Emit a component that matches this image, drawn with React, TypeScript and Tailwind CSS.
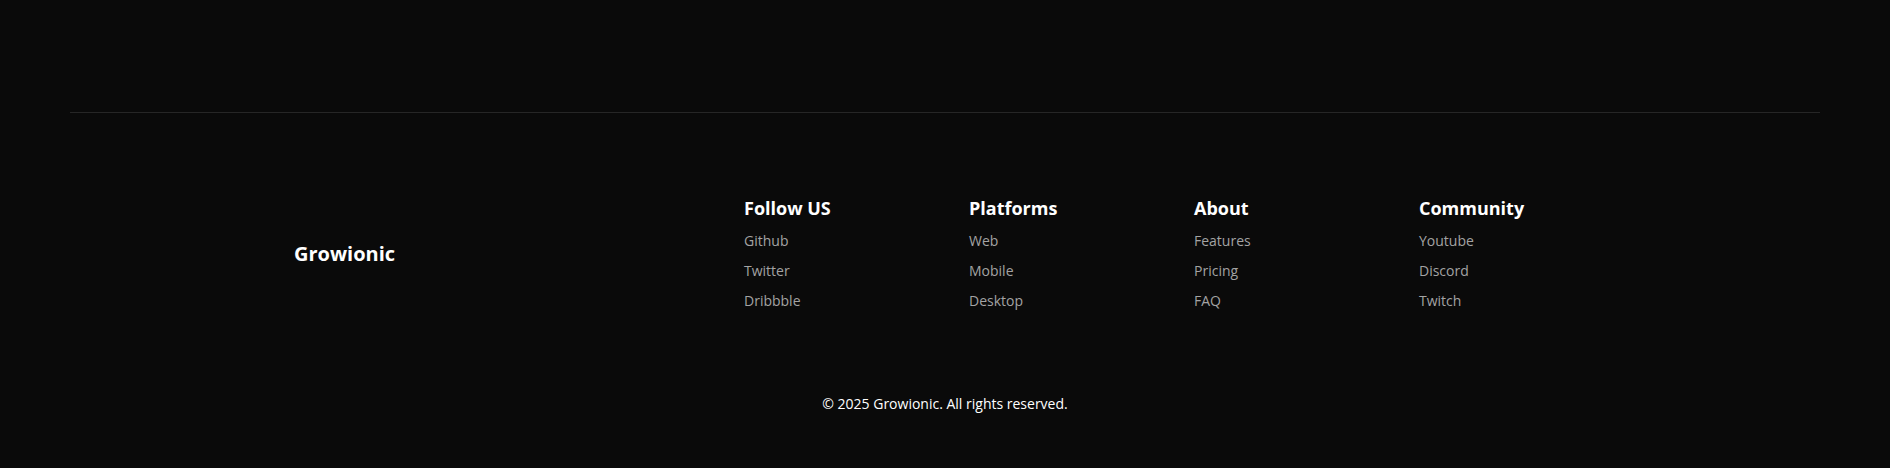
const columns = [
  { title: 'Follow US', links: ['Github', 'Twitter', 'Dribbble'] },
  { title: 'Platforms', links: ['Web', 'Mobile', 'Desktop'] },
  { title: 'About', links: ['Features', 'Pricing', 'FAQ'] },
  { title: 'Community', links: ['Youtube', 'Discord', 'Twitch'] },
];

const Footer = () => {
  return (
    <footer className="px-[70px]">
      <div className="border-t border-[#262626]">
        <div className="flex items-center pt-[81px] pl-[224px]">
          <div className="w-[450px] pt-[3px] text-xl leading-7">
            <a href="#" className="font-bold text-white">
              Growionic
            </a>
          </div>
          <div className="grid grid-cols-[repeat(4,225px)]">
            {columns.map((col) => (
              <div key={col.title}>
                <h3 className="text-lg leading-7 font-bold text-white">{col.title}</h3>
                <ul className="mt-[9px] flex flex-col gap-[10px] text-sm leading-5">
                  {col.links.map((link) => (
                    <li key={link}>
                      <a href="#" className="text-[#a3a3a3] hover:text-white">
                        {link}
                      </a>
                    </li>
                  ))}
                </ul>
              </div>
            ))}
          </div>
        </div>
        <p className="mt-[83px] pb-[55px] text-center text-sm leading-5 text-white">
          © 2025 Growionic. All rights reserved.
        </p>
      </div>
    </footer>
  );
};

export default function App() {
  return (
    <div className="min-h-screen bg-[#0a0a0a] pt-[112px] font-['Open_Sans',sans-serif]">
      <Footer />
    </div>
  );
}
